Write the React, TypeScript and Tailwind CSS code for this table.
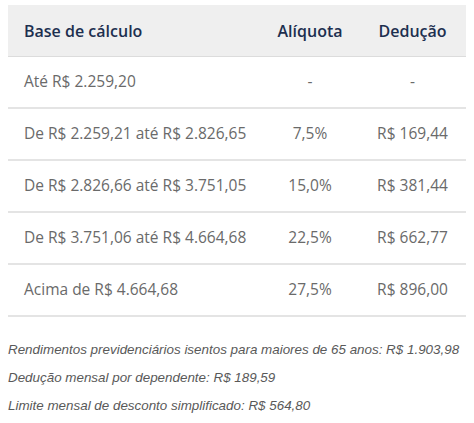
const rows = [
  { base: 'Até R$ 2.259,20', aliquota: '-', deducao: '-' },
  { base: 'De R$ 2.259,21 até R$ 2.826,65', aliquota: '7,5%', deducao: 'R$ 169,44' },
  { base: 'De R$ 2.826,66 até R$ 3.751,05', aliquota: '15,0%', deducao: 'R$ 381,44' },
  { base: 'De R$ 3.751,06 até R$ 4.664,68', aliquota: '22,5%', deducao: 'R$ 662,77' },
  { base: 'Acima de R$ 4.664,68', aliquota: '27,5%', deducao: 'R$ 896,00' },
];

const notes = [
  'Rendimentos previdenciários isentos para maiores de 65 anos: R$ 1.903,98',
  'Dedução mensal por dependente: R$ 189,59',
  'Limite mensal de desconto simplificado: R$ 564,80',
];

export default function App() {
  return (
    <div className="w-[474px] h-[423px] bg-white px-2 pt-[5px] overflow-hidden">
      {/* tabela */}
      <div className="font-['Open_Sans',sans-serif] text-[15.5px]">
        <div className="grid grid-cols-[254px_96px_109px] h-[52px] items-center bg-[#efefef] border-b border-[#dcdcdc] text-[#1d2f4f] text-[16px] font-semibold">
          <span className="pl-4">Base de cálculo</span>
          <span className="text-center">Alíquota</span>
          <span className="text-center">Dedução</span>
        </div>
        {rows.map((r) => (
          <div
            key={r.base}
            className="grid grid-cols-[254px_96px_109px] h-[52px] items-center border-b-2 border-[#e4e4e4] text-[#6a6a6a]"
          >
            <span className="pl-4">{r.base}</span>
            <span className="text-center">{r.aliquota}</span>
            <span className="text-center">{r.deducao}</span>
          </div>
        ))}
      </div>

      {/* observações */}
      <div className="mt-[19px] font-['Liberation_Sans',Arial,sans-serif] italic text-[13.4px] leading-[28px] text-[#595959]">
        {notes.map((n) => (
          <p key={n}>{n}</p>
        ))}
      </div>
    </div>
  );
}
